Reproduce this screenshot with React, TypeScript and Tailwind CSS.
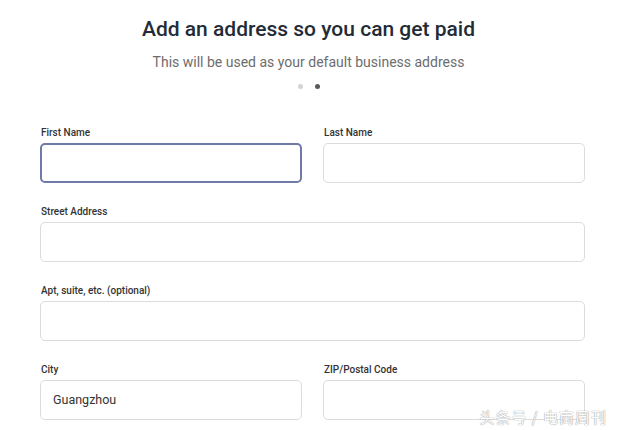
import React from 'react'

type FieldProps = {
  label: string
  value?: string
  focused?: boolean
}

function Field({ label, value, focused }: FieldProps) {
  return (
    <div className="flex flex-col">
      <label className="text-[10px] font-medium text-[#333] leading-[14px] mb-[3px] pl-px">{label}</label>
      <div
        className={
          focused
            ? 'h-[40px] rounded-[5px] border-2 border-[#6f7aa8] bg-white flex items-center px-[11px]'
            : 'h-[40px] rounded-[5px] border border-[#dcdcdc] bg-white flex items-center px-3'
        }
      >
        <span className="text-[12.5px] text-[#333]">{value}</span>
      </div>
    </div>
  )
}

export default function App() {
  return (
    <div className="relative w-[617px] h-[430px] bg-white overflow-hidden font-['Roboto','Noto_Sans',sans-serif]">
      <div className="flex flex-col items-center pt-[15px]">
        <h1 className="text-[21px] font-medium text-[#222b36] leading-[28px]">
          Add an address so you can get paid
        </h1>
        <p className="mt-[9px] text-[14px] text-[#6d6d6d] leading-[20px]">
          This will be used as your default business address
        </p>
        <div className="mt-[12px] flex gap-[12px]">
          <span className="w-[5px] h-[5px] rounded-full bg-[#d3d3d3]" />
          <span className="w-[5px] h-[5px] rounded-full bg-[#5a5a5a]" />
        </div>
      </div>

      <div className="ml-[40px] mr-[32px] mt-[37px] flex flex-col gap-[22px]">
        <div className="grid grid-cols-2 gap-[21px]">
          <Field label="First Name" focused />
          <Field label="Last Name" />
        </div>
        <Field label="Street Address" />
        <Field label="Apt, suite, etc. (optional)" />
        <div className="grid grid-cols-2 gap-[21px]">
          <Field label="City" value="Guangzhou" />
          <Field label="ZIP/Postal Code" />
        </div>
      </div>

      <div className="absolute right-[10px] bottom-[2px] text-[15px] text-white tracking-[1px] font-['Noto_Sans_CJK_SC',sans-serif] [text-shadow:0_0_1px_#999,0_0_1px_#999]">
        头条号 / 电商周刊
      </div>
    </div>
  )
}
